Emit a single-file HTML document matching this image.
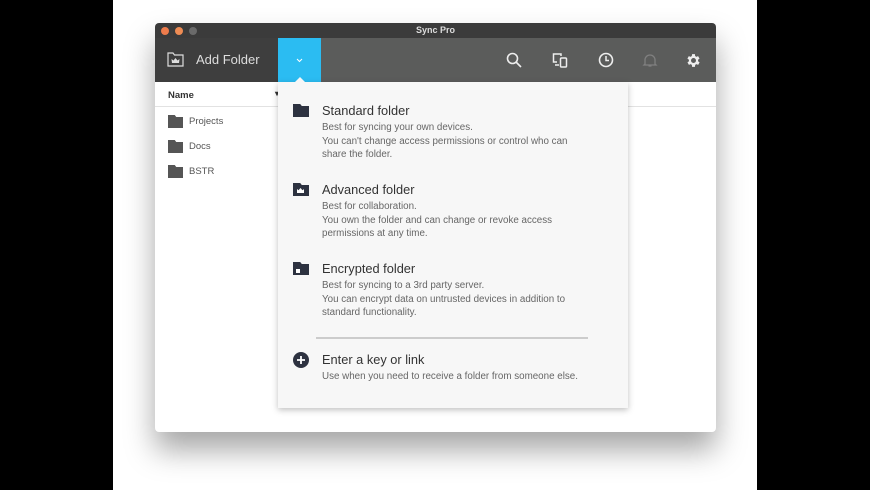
<!DOCTYPE html>
<html><head><style>
*{margin:0;padding:0;box-sizing:border-box}
body{width:870px;height:490px;background:#000;position:relative;overflow:hidden;font-family:"Liberation Sans",sans-serif}
.stage{position:absolute;left:113px;top:0;width:644px;height:490px;background:#fff}
.win{position:absolute;left:155px;top:23px;width:561px;height:409px;background:#fff;border-radius:4px;overflow:hidden;box-shadow:0 18px 30px rgba(0,0,0,.35)}
.title{position:absolute;left:0;top:0;width:561px;height:15px;background:#3b3b3b;color:#ddd;font-size:9px;font-weight:bold;text-align:center;line-height:15px}
.dot{position:absolute;top:4px;width:8px;height:8px;border-radius:50%}
.tb{position:absolute;left:0;top:15px;width:561px;height:44px;background:#5b5c5b}
.tbl{position:absolute;left:0;top:0;width:123px;height:44px;background:#3e3e3e;color:#ddd;font-size:13px}
.blue{position:absolute;left:123px;top:0;width:43px;height:44px;background:#2bbcf2}
.hdr{position:absolute;left:0;top:59px;width:561px;height:25px;border-bottom:1px solid #e2e2e2;font-size:9.5px;font-weight:bold;color:#333;padding:8px 0 0 13px}
.row{position:absolute;left:13px;font-size:9.5px;color:#555}
.row i{display:inline-block;width:15px;height:13px;background:#555;vertical-align:middle;margin-right:6px;clip-path:polygon(0 0,45% 0,55% 15%,100% 15%,100% 100%,0 100%)}
.menu{position:absolute;left:278px;top:82px;width:350px;height:326px;background:#f7f7f7;box-shadow:0 2px 6px rgba(0,0,0,.25)}
.item{position:absolute;left:44px;color:#333}
.item h{display:block;font-size:12.8px;color:#333;margin-bottom:3px}
.item p{font-size:9.8px;color:#666;line-height:13.5px}
.fi{position:absolute;left:15px;width:16px;height:13px;background:#2d3240;clip-path:polygon(0 0,45% 0,55% 15%,100% 15%,100% 100%,0 100%)}
</style></head><body>
<div class="stage"></div>
<div class="win">
 <div class="title">Sync Pro</div>
 <div class="dot" style="left:6px;background:#ee7c4c"></div>
 <div class="dot" style="left:20px;background:#ee8c54"></div>
 <div class="dot" style="left:34px;background:#6a6a6a"></div>
 <div class="tb">
  <div class="tbl">
   <svg style="position:absolute;left:12px;top:14px" width="17" height="15" viewBox="0 0 17 15"><path d="M1 1h5l1.5 2H16v11H1z" fill="none" stroke="#ddd" stroke-width="1.2"/><path d="M5 11h7l.5-4-2 1.5L8.5 6 6.5 8.5 4.5 7z" fill="#ddd"/></svg>
   <span style="position:absolute;left:41px;top:14px">Add Folder</span>
  </div>
  <div class="blue"><svg style="position:absolute;left:18px;top:20px" width="7" height="5"><path d="M1 1l2.5 2.5L6 1" stroke="#fff" fill="none"/></svg></div>
  <svg style="position:absolute;left:351px;top:14px" width="16" height="16"><circle cx="6.5" cy="6.5" r="5" fill="none" stroke="#eee" stroke-width="1.6"/><path d="M10 10l5 5" stroke="#eee" stroke-width="1.6"/></svg>
  <svg style="position:absolute;left:397px;top:14px" width="16" height="16"><path d="M9 4V2H1.5v8H5" fill="none" stroke="#eee" stroke-width="1.5"/><rect x="8.5" y="6" width="6" height="9" rx="1" fill="none" stroke="#eee" stroke-width="1.5"/><path d="M3 13h4" stroke="#eee" stroke-width="1.5"/></svg>
  <svg style="position:absolute;left:443px;top:14px" width="16" height="16"><circle cx="8" cy="8" r="6.5" fill="none" stroke="#eee" stroke-width="1.6"/><path d="M8 4v4.5h3" fill="none" stroke="#eee" stroke-width="1.5"/></svg>
  <svg style="position:absolute;left:487px;top:14px" width="16" height="16"><path d="M3 12V8a5 5 0 0 1 10 0v4l1 1H2z M6.5 14h3" fill="none" stroke="#808080" stroke-width="1.3"/></svg>
  <svg style="position:absolute;left:530px;top:14px" width="17" height="17" viewBox="0 0 24 24"><path fill="#eee" d="M19.4 13a7.5 7.5 0 0 0 0-2l2.1-1.6-2-3.5-2.5 1a7 7 0 0 0-1.7-1L15 3h-4l-.4 2.9a7 7 0 0 0-1.7 1l-2.5-1-2 3.5L6.6 11a7.5 7.5 0 0 0 0 2l-2.1 1.6 2 3.5 2.5-1a7 7 0 0 0 1.7 1L11 21h4l.4-2.9a7 7 0 0 0 1.7-1l2.5 1 2-3.5zM13 15.5a3.5 3.5 0 1 1 0-7 3.5 3.5 0 0 1 0 7z" transform="translate(-1 0)"/></svg>
 </div>
 <div class="hdr">Name<span style="position:absolute;left:120px;top:7px;font-size:8px">▾</span></div>
 <div class="row" style="top:92px"><i></i>Projects</div>
 <div class="row" style="top:117px"><i></i>Docs</div>
 <div class="row" style="top:142px"><i></i>BSTR</div>
</div>
<div class="menu">
 <div style="position:absolute;left:17px;top:-5px;width:0;height:0;border-left:5px solid transparent;border-right:5px solid transparent;border-bottom:5px solid #f7f7f7"></div>
 <div class="fi" style="top:22px"></div>
 <div class="item" style="top:21px"><h>Standard folder</h><p>Best for syncing your own devices.<br>You can't change access permissions or control who can<br>share the folder.</p></div>
 <div class="fi" style="top:101px"></div><svg style="position:absolute;left:19px;top:106px" width="7" height="6"><path d="M0 5h7l.2-4-1.7 1.3L3.5 0 1.5 2.3 0 1z" fill="#fff"/></svg>
 <div class="item" style="top:100px"><h>Advanced folder</h><p>Best for collaboration.<br>You own the folder and can change or revoke access<br>permissions at any time.</p></div>
 <div class="fi" style="top:180px"></div><div style="position:absolute;left:18px;top:187px;width:4px;height:4px;background:#fff"></div>
 <div class="item" style="top:179px"><h>Encrypted folder</h><p>Best for syncing to a 3rd party server.<br>You can encrypt data on untrusted devices in addition to<br>standard functionality.</p></div>
 <div style="position:absolute;left:38px;top:255px;width:272px;height:2px;background:#ccc"></div>
 <svg style="position:absolute;left:15px;top:270px" width="16" height="16"><circle cx="8" cy="8" r="8" fill="#2d3240"/><path d="M8 4v8M4 8h8" stroke="#fff" stroke-width="1.8"/></svg>
 <div class="item" style="top:270px"><h>Enter a key or link</h><p>Use when you need to receive a folder from someone else.</p></div>
</div>
</body></html>
